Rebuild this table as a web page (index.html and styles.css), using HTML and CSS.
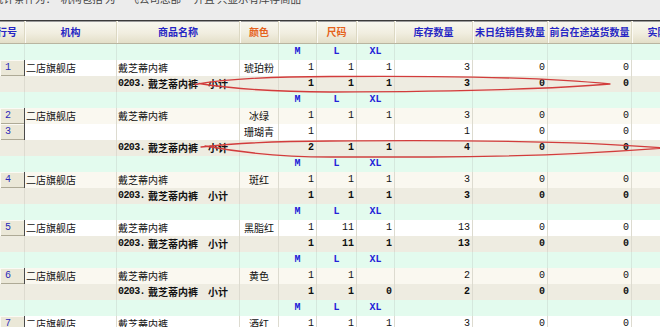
FILE: index.html
```html
<!DOCTYPE html>
<html lang="zh-CN">
<head>
<meta charset="utf-8">
<title>库存查询</title>
<link rel="stylesheet" href="styles.css">
</head>
<body>
<div class="page">
  <div class="cond"><span class="cond-text">统计条件为：&nbsp;&nbsp;机构包括 为 ‘飞公司总部’ 并且 只显示有库存商品</span></div>

  <div class="grid">
    <div class="row head">
      <div class="c w-no"><span class="hno">行号</span></div>
      <div class="c w-org ctr">机构</div>
      <div class="c w-name ctr">商品名称</div>
      <div class="c w-color ctr orange">颜色</div>
      <div class="c w-m"></div>
      <div class="c w-l ctr orange">尺码</div>
      <div class="c w-xl"></div>
      <div class="c w-stock ctr">库存数量</div>
      <div class="c w-uns ctr">未日结销售数量</div>
      <div class="c w-tr ctr">前台在途送货数量</div>
      <div class="c w-act ctr">实际库存数量</div>
    </div>

    <!-- group 1 -->
    <div class="row sizes">
      <div class="c w-no"></div><div class="c w-org"></div><div class="c w-name"></div><div class="c w-color"></div>
      <div class="c w-m ctr lbl">M</div><div class="c w-l ctr lbl">L</div><div class="c w-xl ctr lbl">XL</div>
      <div class="c w-stock"></div><div class="c w-uns"></div><div class="c w-tr"></div><div class="c w-act"></div>
    </div>
    <div class="row data">
      <div class="c w-no btn">1</div><div class="c w-org txt">二店旗舰店</div><div class="c w-name txt">戴芝蒂内裤</div><div class="c w-color ctr">琥珀粉</div>
      <div class="c w-m num">1</div><div class="c w-l num">1</div><div class="c w-xl num">1</div>
      <div class="c w-stock num">3</div><div class="c w-uns num">0</div><div class="c w-tr num">0</div><div class="c w-act"></div>
    </div>
    <div class="row sub">
      <div class="c w-no"></div><div class="c w-org"></div><div class="c w-name txt"><span class="code">0203.</span>戴芝蒂内裤<span class="gap">小计</span></div><div class="c w-color"></div>
      <div class="c w-m num">1</div><div class="c w-l num">1</div><div class="c w-xl num">1</div>
      <div class="c w-stock num">3</div><div class="c w-uns num">0</div><div class="c w-tr num">0</div><div class="c w-act"></div>
    </div>

    <!-- group 2 -->
    <div class="row sizes">
      <div class="c w-no"></div><div class="c w-org"></div><div class="c w-name"></div><div class="c w-color"></div>
      <div class="c w-m ctr lbl">M</div><div class="c w-l ctr lbl">L</div><div class="c w-xl ctr lbl">XL</div>
      <div class="c w-stock"></div><div class="c w-uns"></div><div class="c w-tr"></div><div class="c w-act"></div>
    </div>
    <div class="row data alt">
      <div class="c w-no btn">2</div><div class="c w-org txt">二店旗舰店</div><div class="c w-name txt">戴芝蒂内裤</div><div class="c w-color ctr">冰绿</div>
      <div class="c w-m num">1</div><div class="c w-l num">1</div><div class="c w-xl num">1</div>
      <div class="c w-stock num">3</div><div class="c w-uns num">0</div><div class="c w-tr num">0</div><div class="c w-act"></div>
    </div>
    <div class="row data">
      <div class="c w-no btn">3</div><div class="c w-org txt"></div><div class="c w-name txt"></div><div class="c w-color ctr">珊瑚青</div>
      <div class="c w-m num">1</div><div class="c w-l num"></div><div class="c w-xl num"></div>
      <div class="c w-stock num">1</div><div class="c w-uns num">0</div><div class="c w-tr num">0</div><div class="c w-act"></div>
    </div>
    <div class="row sub">
      <div class="c w-no"></div><div class="c w-org"></div><div class="c w-name txt"><span class="code">0203.</span>戴芝蒂内裤<span class="gap">小计</span></div><div class="c w-color"></div>
      <div class="c w-m num">2</div><div class="c w-l num">1</div><div class="c w-xl num">1</div>
      <div class="c w-stock num">4</div><div class="c w-uns num">0</div><div class="c w-tr num">0</div><div class="c w-act"></div>
    </div>

    <!-- group 3 -->
    <div class="row sizes">
      <div class="c w-no"></div><div class="c w-org"></div><div class="c w-name"></div><div class="c w-color"></div>
      <div class="c w-m ctr lbl">M</div><div class="c w-l ctr lbl">L</div><div class="c w-xl ctr lbl">XL</div>
      <div class="c w-stock"></div><div class="c w-uns"></div><div class="c w-tr"></div><div class="c w-act"></div>
    </div>
    <div class="row data alt">
      <div class="c w-no btn">4</div><div class="c w-org txt">二店旗舰店</div><div class="c w-name txt">戴芝蒂内裤</div><div class="c w-color ctr">斑红</div>
      <div class="c w-m num">1</div><div class="c w-l num">1</div><div class="c w-xl num">1</div>
      <div class="c w-stock num">3</div><div class="c w-uns num">0</div><div class="c w-tr num">0</div><div class="c w-act"></div>
    </div>
    <div class="row sub">
      <div class="c w-no"></div><div class="c w-org"></div><div class="c w-name txt"><span class="code">0203.</span>戴芝蒂内裤<span class="gap">小计</span></div><div class="c w-color"></div>
      <div class="c w-m num">1</div><div class="c w-l num">1</div><div class="c w-xl num">1</div>
      <div class="c w-stock num">3</div><div class="c w-uns num">0</div><div class="c w-tr num">0</div><div class="c w-act"></div>
    </div>

    <!-- group 4 -->
    <div class="row sizes">
      <div class="c w-no"></div><div class="c w-org"></div><div class="c w-name"></div><div class="c w-color"></div>
      <div class="c w-m ctr lbl">M</div><div class="c w-l ctr lbl">L</div><div class="c w-xl ctr lbl">XL</div>
      <div class="c w-stock"></div><div class="c w-uns"></div><div class="c w-tr"></div><div class="c w-act"></div>
    </div>
    <div class="row data">
      <div class="c w-no btn">5</div><div class="c w-org txt">二店旗舰店</div><div class="c w-name txt">戴芝蒂内裤</div><div class="c w-color ctr">黑脂红</div>
      <div class="c w-m num">1</div><div class="c w-l num">11</div><div class="c w-xl num">1</div>
      <div class="c w-stock num">13</div><div class="c w-uns num">0</div><div class="c w-tr num">0</div><div class="c w-act"></div>
    </div>
    <div class="row sub">
      <div class="c w-no"></div><div class="c w-org"></div><div class="c w-name txt"><span class="code">0203.</span>戴芝蒂内裤<span class="gap">小计</span></div><div class="c w-color"></div>
      <div class="c w-m num">1</div><div class="c w-l num">11</div><div class="c w-xl num">1</div>
      <div class="c w-stock num">13</div><div class="c w-uns num">0</div><div class="c w-tr num">0</div><div class="c w-act"></div>
    </div>

    <!-- group 5 -->
    <div class="row sizes">
      <div class="c w-no"></div><div class="c w-org"></div><div class="c w-name"></div><div class="c w-color"></div>
      <div class="c w-m ctr lbl">M</div><div class="c w-l ctr lbl">L</div><div class="c w-xl ctr lbl">XL</div>
      <div class="c w-stock"></div><div class="c w-uns"></div><div class="c w-tr"></div><div class="c w-act"></div>
    </div>
    <div class="row data alt">
      <div class="c w-no btn">6</div><div class="c w-org txt">二店旗舰店</div><div class="c w-name txt">戴芝蒂内裤</div><div class="c w-color ctr">黄色</div>
      <div class="c w-m num">1</div><div class="c w-l num">1</div><div class="c w-xl num"></div>
      <div class="c w-stock num">2</div><div class="c w-uns num">0</div><div class="c w-tr num">0</div><div class="c w-act"></div>
    </div>
    <div class="row sub">
      <div class="c w-no"></div><div class="c w-org"></div><div class="c w-name txt"><span class="code">0203.</span>戴芝蒂内裤<span class="gap">小计</span></div><div class="c w-color"></div>
      <div class="c w-m num">1</div><div class="c w-l num">1</div><div class="c w-xl num">0</div>
      <div class="c w-stock num">2</div><div class="c w-uns num">0</div><div class="c w-tr num">0</div><div class="c w-act"></div>
    </div>

    <!-- group 6 -->
    <div class="row sizes">
      <div class="c w-no"></div><div class="c w-org"></div><div class="c w-name"></div><div class="c w-color"></div>
      <div class="c w-m ctr lbl">M</div><div class="c w-l ctr lbl">L</div><div class="c w-xl ctr lbl">XL</div>
      <div class="c w-stock"></div><div class="c w-uns"></div><div class="c w-tr"></div><div class="c w-act"></div>
    </div>
    <div class="row data">
      <div class="c w-no btn">7</div><div class="c w-org txt">二店旗舰店</div><div class="c w-name txt">戴芝蒂内裤</div><div class="c w-color ctr">酒红</div>
      <div class="c w-m num">1</div><div class="c w-l num">1</div><div class="c w-xl num">1</div>
      <div class="c w-stock num">3</div><div class="c w-uns num">0</div><div class="c w-tr num">0</div><div class="c w-act"></div>
    </div>
  </div>

  <svg class="marks" width="660" height="327" viewBox="0 0 660 327" aria-hidden="true">
    <path d="M195,84.5 C225,79 275,76.5 330,76.5 C420,76 530,76 610,84 C565,88 470,91.5 330,92 C270,92 228,88 199,83.5" />
    <path d="M201,147 C238,143 288,141 330,141 C430,140 570,140 664,148 C610,152 520,157 430,157 L330,157 C280,157 238,152 205,146" />
  </svg>
</div>
</body>
</html>
```

FILE: styles.css
```css
html, body {
  margin: 0;
  padding: 0;
  overflow: hidden;
  background: #ececec;
}

body {
  font-family: "Noto Sans CJK SC", "Noto Sans", sans-serif;
  font-size: 10px;
  color: #111;
}

.page {
  position: relative;
  width: 660px;
  height: 327px;
  overflow: hidden;
}

.cond {
  height: 20px;
  overflow: hidden;
  color: #444;
  font-size: 10.5px;
  white-space: nowrap;
}

.cond-text {
  display: block;
  margin-top: -8px;
  margin-left: -7px;
  line-height: 14px;
}

.grid {
  width: 724px;
}

.row {
  display: flex;
  height: 16px;
}

.c {
  box-sizing: border-box;
  height: 100%;
  display: flex;
  align-items: center;
  white-space: nowrap;
  overflow: hidden;
  border-right: 1px solid #dddbd0;
  padding: 0 2px;
  line-height: 1;
}

.w-no { width: 25px; }
.w-org { width: 92px; }
.w-name { width: 123px; }
.w-color { width: 39px; }
.w-m { width: 38px; }
.w-l { width: 40px; }
.w-xl { width: 38px; }
.w-stock { width: 78px; }
.w-uns { width: 75px; }
.w-tr { width: 84px; }
.w-act { width: 92px; }

.ctr { justify-content: center; padding: 0; }
.num {
  justify-content: flex-end;
  font-family: "Liberation Mono", monospace;
  font-size: 10px;
}
.txt { padding-left: 1px; }

/* header */
.head {
  height: 22px;
  border-top: 1px solid #3a3a3a;
  border-bottom: 1px solid #b9b5a0;
  background: linear-gradient(#f8f7ef, #f1eee0 55%, #e3dfc8);
  color: #2626c4;
  font-weight: 700;
  box-shadow: inset 0 1px 0 #9a9a9a;
}
.head .c {
  border-right: 1px solid #dcd8c3;
  box-shadow: 1px 0 0 #fbfaf4;
}
.head .orange { color: #e5621c; }
.head .w-no { padding: 0; }
.hno { margin-left: -3px; }

/* size label rows */
.sizes { background: #e3fbee; }
.sizes .c { border-right-color: #d5e8dd; }
.lbl {
  font-family: "Liberation Mono", monospace;
  font-weight: 700;
  color: #2424d8;
  font-size: 10px;
}

/* data rows */
.data { background: #ffffff; }
.data.alt { background: #faf8f0; }
.btn {
  background: #ebe8d8;
  border-right: 1px solid #4a4a4a;
  box-shadow: inset 1px 1px 0 #fbfaf4, inset 0 -1px 0 #aeaa96;
  color: #2a2ab8;
  font-family: "Liberation Mono", monospace;
  padding-left: 5px;
}

/* subtotal rows */
.sub {
  background: #eeece1;
  font-weight: 700;
}
.code {
  font-family: "Liberation Mono", monospace;
  margin-right: 3px;
  letter-spacing: -0.6px;
}
.gap { margin-left: 10px; }

/* red hand-drawn marks */
.marks {
  position: absolute;
  left: 0;
  top: 0;
  pointer-events: none;
}
.marks path {
  fill: none;
  stroke: #d23c3c;
  stroke-width: 1.3;
  stroke-linejoin: round;
  stroke-linecap: round;
}
```
